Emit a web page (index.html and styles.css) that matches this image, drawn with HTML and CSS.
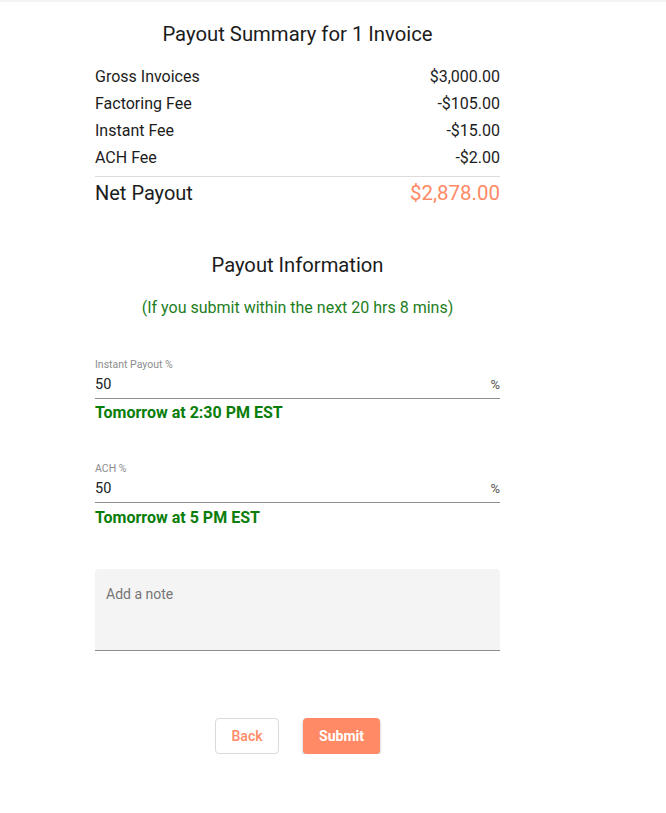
FILE: index.html
```html
<!DOCTYPE html>
<html>
<head>
<meta charset="utf-8">
<link rel="stylesheet" href="styles.css">
</head>
<body>
<div class="topbar"></div>
<main class="panel">
  <h1 class="title">Payout Summary for 1 Invoice</h1>
  <div class="rows">
    <div class="row"><span>Gross Invoices</span><span>$3,000.00</span></div>
    <div class="row"><span>Factoring Fee</span><span>-$105.00</span></div>
    <div class="row"><span>Instant Fee</span><span>-$15.00</span></div>
    <div class="row"><span>ACH Fee</span><span>-$2.00</span></div>
  </div>
  <div class="net"><span>Net Payout</span><span class="net-amount">$2,878.00</span></div>

  <h2 class="subtitle">Payout Information</h2>
  <p class="deadline">(If you submit within the next 20 hrs 8 mins)</p>

  <div class="field">
    <label class="field-label">Instant Payout %</label>
    <div class="field-input"><span>50</span><span class="suffix">%</span></div>
  </div>
  <p class="eta">Tomorrow at 2:30 PM EST</p>

  <div class="field field-second">
    <label class="field-label">ACH %</label>
    <div class="field-input"><span>50</span><span class="suffix">%</span></div>
  </div>
  <p class="eta eta-second">Tomorrow at 5 PM EST</p>

  <div class="note"><span class="placeholder">Add a note</span></div>

  <div class="actions">
    <button class="btn btn-back">Back</button>
    <button class="btn btn-submit">Submit</button>
  </div>
</main>
</body>
</html>
```

FILE: styles.css
```css
* { box-sizing: border-box; }
html, body {
  margin: 0;
  padding: 0;
  background: #ffffff;
  font-family: Roboto, "Liberation Sans", Arial, sans-serif;
  color: #212121;
}
.topbar {
  height: 2px;
  background: #f3f3f3;
}
.panel {
  width: 405px;
  margin-left: 95px;
  padding-top: 20px;
}
.title {
  margin: 0;
  font-size: 20.3px;
  font-weight: 400;
  line-height: 24px;
  text-align: center;
  color: #1c1c1c;
}
.rows {
  margin-top: 17px;
}
.row {
  display: flex;
  justify-content: space-between;
  font-size: 16px;
  line-height: 27px;
  color: #1c1c1c;
}
.net {
  margin-top: 5px;
  border-top: 1px solid #dcdcdc;
  display: flex;
  justify-content: space-between;
  align-items: center;
  height: 32px;
  font-size: 20px;
  color: #1c1c1c;
}
.net-amount {
  color: #ff8a65;
  font-size: 20.5px;
}
.subtitle {
  margin: 45px 0 0;
  font-size: 20.2px;
  font-weight: 400;
  line-height: 24px;
  text-align: center;
  color: #1c1c1c;
}
.deadline {
  margin: 21px 0 0;
  text-align: center;
  font-size: 16px;
  line-height: 20px;
  color: #1e7e1e;
}
.field {
  margin-top: 40px;
}
.field-second {
  margin-top: 40px;
}
.field-label {
  display: block;
  font-size: 10.5px;
  line-height: 14px;
  color: #8c8c8c;
}
.field-input {
  display: flex;
  justify-content: space-between;
  align-items: center;
  height: 27px;
  border-bottom: 1px solid #8d8d8d;
  font-size: 14.5px;
  color: #212121;
  padding-bottom: 2px;
}
.suffix {
  font-size: 13px;
  color: #555;
}
.eta {
  margin: 5px 0 0;
  font-size: 16px;
  line-height: 18px;
  font-weight: 700;
  color: #0a7d0a;
}
.eta-second {
  margin-top: 6px;
}
.note {
  margin-top: 42px;
  height: 82px;
  background: #f4f4f4;
  border-radius: 4px 4px 0 0;
  border-bottom: 1px solid #8d8d8d;
  padding: 15px 11px;
}
.placeholder {
  font-size: 14px;
  color: #757575;
}
.actions {
  margin-top: 67px;
  display: flex;
  justify-content: center;
  gap: 24px;
}
.btn {
  height: 36px;
  border-radius: 4px;
  font-family: Roboto, "Liberation Sans", Arial, sans-serif;
  font-size: 14px;
  font-weight: 500;
  cursor: pointer;
}
.btn-back {
  width: 64px;
  background: #fff;
  border: 1px solid #dadada;
  color: #ff8a65;
}
.btn-submit {
  width: 77px;
  background: #ff8a65;
  border: none;
  color: #fff;
  font-weight: 700;
  box-shadow: 0 2px 3px rgba(0,0,0,0.25);
}
```
